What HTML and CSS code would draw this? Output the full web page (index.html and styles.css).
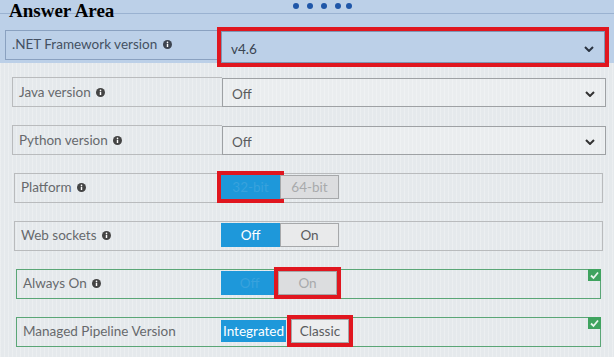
FILE: index.html
```html
<!DOCTYPE html>
<html lang="en">
  <head>
    <meta charset="UTF-8">
    <meta name="viewport" content="width=device-width, initial-scale=1.0">
    <title>Answer Area</title>
    <link rel="stylesheet" href="styles.css">
  </head>
  <body>
    <div class="answer-area">
      <div class="band">
        <div class="band-top">
          <h1 class="title">Answer Area</h1>
          <div class="dots"><span></span><span></span><span></span><span></span><span></span></div>
        </div>
        <div class="row row-net">
          <div class="label">.NET Framework version <svg class="info" viewBox="0 0 10 10"><circle cx="5" cy="5" r="5" fill="#3d4450"/><rect x="4.2" y="4.2" width="1.6" height="3.6" fill="#fff"/><circle cx="5" cy="2.7" r="0.9" fill="#fff"/></svg></div>
          <div class="select picked">
            <span>v4.6</span>
            <svg class="chev" viewBox="0 0 10 6"><path d="M1 1 L5 5 L9 1" fill="none" stroke="#2a3340" stroke-width="2"/></svg>
          </div>
        </div>
      </div>

      <div class="rows">
        <div class="row">
          <div class="label boxed">Java version <svg class="info" viewBox="0 0 10 10"><circle cx="5" cy="5" r="5" fill="#444"/><rect x="4.2" y="4.2" width="1.6" height="3.6" fill="#fff"/><circle cx="5" cy="2.7" r="0.9" fill="#fff"/></svg></div>
          <div class="select">
            <span>Off</span>
            <svg class="chev" viewBox="0 0 10 6"><path d="M1 1 L5 5 L9 1" fill="none" stroke="#333" stroke-width="2"/></svg>
          </div>
        </div>

        <div class="row">
          <div class="label boxed">Python version <svg class="info" viewBox="0 0 10 10"><circle cx="5" cy="5" r="5" fill="#444"/><rect x="4.2" y="4.2" width="1.6" height="3.6" fill="#fff"/><circle cx="5" cy="2.7" r="0.9" fill="#fff"/></svg></div>
          <div class="select">
            <span>Off</span>
            <svg class="chev" viewBox="0 0 10 6"><path d="M1 1 L5 5 L9 1" fill="none" stroke="#333" stroke-width="2"/></svg>
          </div>
        </div>

        <div class="row framed">
          <div class="label">Platform <svg class="info" viewBox="0 0 10 10"><circle cx="5" cy="5" r="5" fill="#444"/><rect x="4.2" y="4.2" width="1.6" height="3.6" fill="#fff"/><circle cx="5" cy="2.7" r="0.9" fill="#fff"/></svg></div>
          <div class="toggle">
            <span class="opt on faded picked">32-bit</span>
            <span class="opt off-grey">64-bit</span>
          </div>
        </div>

        <div class="row framed">
          <div class="label">Web sockets <svg class="info" viewBox="0 0 10 10"><circle cx="5" cy="5" r="5" fill="#444"/><rect x="4.2" y="4.2" width="1.6" height="3.6" fill="#fff"/><circle cx="5" cy="2.7" r="0.9" fill="#fff"/></svg></div>
          <div class="toggle">
            <span class="opt on">Off</span>
            <span class="opt">On</span>
          </div>
        </div>

        <div class="row framed changed">
          <div class="label">Always On <svg class="info" viewBox="0 0 10 10"><circle cx="5" cy="5" r="5" fill="#444"/><rect x="4.2" y="4.2" width="1.6" height="3.6" fill="#fff"/><circle cx="5" cy="2.7" r="0.9" fill="#fff"/></svg></div>
          <div class="toggle">
            <span class="opt on faded short">Off</span>
            <span class="opt off-grey picked">On</span>
          </div>
          <svg class="tick" viewBox="0 0 13 12"><rect width="13" height="12" fill="#3fa35f"/><path d="M3 6.5 L5.5 9 L10 3.5" fill="none" stroke="#e8f5ec" stroke-width="1.8"/></svg>
        </div>

        <div class="row framed changed">
          <div class="label">Managed Pipeline Version</div>
          <div class="toggle">
            <span class="opt on wide">Integrated</span>
            <span class="opt classic picked">Classic</span>
          </div>
          <svg class="tick" viewBox="0 0 13 12"><rect width="13" height="12" fill="#3fa35f"/><path d="M3 6.5 L5.5 9 L10 3.5" fill="none" stroke="#e8f5ec" stroke-width="1.8"/></svg>
        </div>
      </div>
    </div>
  </body>
</html>
```

FILE: styles.css
```css
body {
  margin: 0;
  background-color: #e5e9ec;
  background-image: repeating-linear-gradient(90deg, rgba(255, 255, 255, 0.25) 0 1px, rgba(0, 0, 0, 0) 1px 4px);
  font-family: Lato, "Open Sans", sans-serif;
  color: #67696c;
}

.answer-area {
  width: 614px;
  height: 357px;
  overflow: hidden;
}

/* blue band with the selected row */
.band {
  height: 63px;
  background: linear-gradient(to bottom, #bcd0e8 13px, #9ab2d1 13px, #9ab2d1 14px, #bcd0e8 14px);
  padding-left: 5px;
  padding-right: 9px;
}

.band-top {
  display: grid;
  grid-template-columns: 288px 1fr;
  height: 28px;
}

.title {
  margin: 0;
  padding-left: 4px;
  font-family: "Liberation Serif", serif;
  font-size: 19px;
  font-weight: bold;
  line-height: 22px;
  color: #000;
}

.dots {
  display: flex;
  gap: 8px;
  padding-top: 3px;
}

.dots span {
  width: 6px;
  height: 6px;
  border-radius: 50%;
  background: #1f56a8;
}

.dots span:nth-child(5) {
  margin-left: -3px;
}

.row {
  display: flex;
  height: 30px;
  position: relative;
}

.label {
  width: 210px;
  box-sizing: border-box;
  padding: 6px 0 0 6px;
  font-size: 13.5px;
  line-height: 16px;
  white-space: nowrap;
}

.label.boxed {
  border: 1px solid #b9bbbd;
  border-right: none;
}

.info {
  width: 9px;
  height: 9px;
  margin-left: 2px;
}

.row-net {
  margin-top: 2px;
}

.row-net .label {
  width: 216px;
  border: 1px solid #8aa1c0;
  border-right: none;
  color: #445062;
  padding-top: 5px;
}

.select {
  flex: 1;
  display: flex;
  align-items: center;
  justify-content: space-between;
  box-sizing: border-box;
  height: 29px;
  margin-top: 1px;
  padding: 3px 10px 0 9px;
  border: 1px solid #9ea1a4;
  background: rgba(255, 255, 255, 0.2);
  font-size: 13.5px;
  color: #5a5c5e;
}

.row-net .select {
  height: 32px;
  border-color: #7f96b4;
  background: transparent;
  color: #3a4452;
}

.chev {
  width: 10px;
  height: 6px;
}

.picked {
  outline: 4px solid #e0161f;
  outline-offset: 0;
}

.rows {
  display: flex;
  flex-direction: column;
  gap: 18px;
  margin-top: 14px;
  padding: 0 8px 0 12px;
}

.row.framed {
  box-sizing: border-box;
  border: 1px solid #b9bbbd;
  margin-left: 2px;
  margin-right: 3px;
}

.row.framed .label {
  width: 206px;
  padding-top: 5px;
}

.row.changed {
  border-color: #5aa676;
  margin-left: 4px;
  margin-right: 5px;
}

.row.changed .label {
  width: 204px;
}

.toggle {
  display: flex;
  margin-top: 1px;
  height: 24px;
}

.opt {
  display: flex;
  align-items: center;
  justify-content: center;
  box-sizing: border-box;
  width: 59px;
  height: 24px;
  border: 1px solid #a6a8aa;
  background: #e9eaeb;
  font-size: 13.5px;
  color: #5a5c5e;
}

.opt.on {
  border-color: #1e98da;
  background: #1e98da;
  color: #fff;
}

.opt.faded {
  color: #38a2dd;
}

.opt.off-grey {
  background: #dcdddf;
  color: #a8aaac;
}

.opt.short {
  width: 57px;
}

.opt.wide {
  width: 65px;
  margin-top: 1px;
  height: 22px;
}

.opt.classic {
  width: 58px;
  margin-left: 5px;
  background: #ecedee;
}

.tick {
  position: absolute;
  top: -1px;
  right: -1px;
  width: 13px;
  height: 12px;
}
```
